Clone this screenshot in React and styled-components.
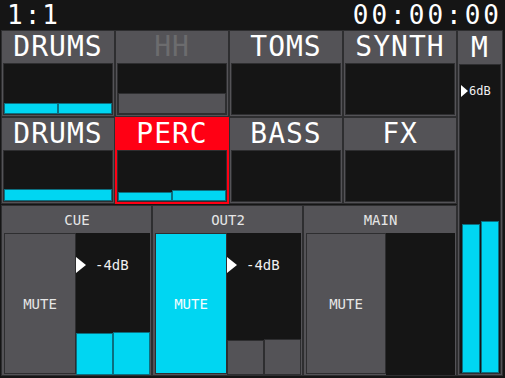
import React from 'react'
import styled, { createGlobalStyle } from 'styled-components'

const GRAY = '#545357'
const EDGE = '#2e2e30'
const BLACK = '#151515'
const CYAN = '#00d6f2'
const RED = '#ff0014'

const GlobalStyle = createGlobalStyle`
    html, body {
        margin: 0;
        background: ${BLACK};
    }
    body {
        font-family: "DejaVu Sans Mono", "Liberation Mono", monospace;
    }
`

const Screen = styled.div`
    width: 505px;
    height: 378px;
    display: flex;
    flex-direction: column;
    background: ${BLACK};
    overflow: hidden;
`

const TopBar = styled.div`
    height: 30px;
    display: flex;
    align-items: center;
    justify-content: space-between;
    padding: 0 3px 0 7px;
    color: #fff;
    font-size: 26px;
    letter-spacing: 2px;
    line-height: 30px;
`

const Clock = styled.span`
    letter-spacing: 3px;
`

const Body = styled.div`
    display: flex;
    height: 346px;
    padding-left: 1px;
`

const LeftSide = styled.div`
    width: 456px;
    display: flex;
    flex-direction: column;
`

const TrackGrid = styled.div`
    display: grid;
    grid-template-columns: 114px 114px 114px 114px;
    grid-template-rows: 87px 87px;
`

const TrackCell = styled.div`
    display: flex;
    flex-direction: column;
    background: ${p => (p.selected ? RED : GRAY)};
    border: 1px solid ${p => (p.selected ? RED : EDGE)};
    box-sizing: border-box;
    padding: 0 1px 1px;
`

const TrackName = styled.div`
    height: ${p => p.h || 32}px;
    display: flex;
    align-items: center;
    justify-content: center;
    font-size: 28px;
    letter-spacing: 1px;
    color: ${p => (p.dim ? '#6c6c6e' : '#fff')};
    line-height: 32px;
`

const MeterBox = styled.div`
    flex: 1;
    display: flex;
    align-items: flex-end;
    background: ${BLACK};
    border: 1px solid ${EDGE};
`

const Bar = styled.div`
    flex: 1;
    box-sizing: border-box;
    background: ${p => (p.empty ? GRAY : CYAN)};
    border: 1px solid ${p => (p.empty ? EDGE : '#0b6f80')};
`

const PanelRow = styled.div`
    display: grid;
    grid-template-columns: 151px 151px 154px;
    height: 172px;
    margin-top: 1px;
`

const Panel = styled.div`
    display: flex;
    flex-direction: column;
    background: ${GRAY};
    border: 1px solid ${EDGE};
    box-sizing: border-box;
    padding: 0 1px 0 2px;
`

const PanelTitle = styled.div`
    height: 27px;
    display: flex;
    align-items: center;
    justify-content: center;
    color: #e6e6e6;
    font-size: 14px;
`

const PanelBody = styled.div`
    flex: 1;
    display: flex;
    min-height: 0;
`

const MuteButton = styled.div`
    width: ${p => p.w}px;
    display: flex;
    align-items: center;
    justify-content: center;
    box-sizing: border-box;
    background: ${p => (p.on ? CYAN : GRAY)};
    border: 1px solid ${EDGE};
    color: ${p => (p.on ? '#f4fdff' : '#e6e6e6')};
    font-size: 14px;
    margin-bottom: 1px;
`

const OutMeter = styled.div`
    position: relative;
    flex: 1;
    display: flex;
    align-items: flex-end;
    background: ${BLACK};
`

const LevelTag = styled.div`
    position: absolute;
    left: ${p => p.left}px;
    top: ${p => p.top}px;
    display: flex;
    align-items: center;
    gap: ${p => p.gap}px;
    color: #f0f0f0;
    font-size: ${p => p.size}px;
`

const Arrow = styled.div`
    width: 0;
    height: 0;
    border-top: ${p => p.h / 2}px solid transparent;
    border-bottom: ${p => p.h / 2}px solid transparent;
    border-left: ${p => p.w}px solid #fff;
`

const MasterColumn = styled.div`
    width: 46px;
    height: 346px;
    display: flex;
    flex-direction: column;
    background: ${GRAY};
    border: 1px solid ${EDGE};
    box-sizing: border-box;
    padding: 0 1px 1px;
`

const MasterMeter = styled.div`
    position: relative;
    flex: 1;
    display: flex;
    align-items: flex-end;
    gap: 1px;
    padding: 0 1px 0 2px;
    background: ${BLACK};
    border: 1px solid ${EDGE};
`

const Meter = ({ levels, empty }) => (
    <>
        {levels.map((h, i) => (
            <Bar key={i} empty={empty} style={{ height: h }} />
        ))}
    </>
)

const tracks = [
    { name: 'DRUMS', levels: [11, 11] },
    { name: 'HH', dim: true, levels: [21], empty: true },
    { name: 'TOMS', levels: [] },
    { name: 'SYNTH', levels: [] },
    { name: 'DRUMS', levels: [12] },
    { name: 'PERC', selected: true, levels: [9, 11] },
    { name: 'BASS', levels: [] },
    { name: 'FX', levels: [] },
]

const outputs = [
    { name: 'CUE', levels: [42, 43], tag: '-4dB', mw: 72 },
    { name: 'OUT2', mute: true, levels: [35, 36], empty: true, tag: '-4dB', mw: 72 },
    { name: 'MAIN', levels: [], mw: 80 },
]

const App = () => {
    return (
        <Screen>
            <GlobalStyle />
            <TopBar>
                <span>1:1</span>
                <Clock>00:00:00</Clock>
            </TopBar>
            <Body>
                <LeftSide>
                    <TrackGrid>
                        {tracks.map((t, i) => (
                            <TrackCell key={i} selected={t.selected}>
                                <TrackName dim={t.dim}>{t.name}</TrackName>
                                <MeterBox>
                                    <Meter levels={t.levels} empty={t.empty} />
                                </MeterBox>
                            </TrackCell>
                        ))}
                    </TrackGrid>
                    <PanelRow>
                        {outputs.map((o) => (
                            <Panel key={o.name}>
                                <PanelTitle>{o.name}</PanelTitle>
                                <PanelBody>
                                    <MuteButton on={o.mute} w={o.mw}>MUTE</MuteButton>
                                    <OutMeter>
                                        <Meter levels={o.levels} empty={o.empty} />
                                        {o.tag && (
                                            <LevelTag left={0} top={24} gap={9} size={14}>
                                                <Arrow w={10} h={16} />
                                                {o.tag}
                                            </LevelTag>
                                        )}
                                    </OutMeter>
                                </PanelBody>
                            </Panel>
                        ))}
                    </PanelRow>
                </LeftSide>
                <MasterColumn>
                    <TrackName h={33}>M</TrackName>
                    <MasterMeter>
                        <LevelTag left={1} top={19} gap={1} size={12}>
                            <Arrow w={7} h={13} />
                            6dB
                        </LevelTag>
                        <Bar style={{ height: 149 }} />
                        <Bar style={{ height: 152 }} />
                    </MasterMeter>
                </MasterColumn>
            </Body>
        </Screen>
    )
}

export default App
